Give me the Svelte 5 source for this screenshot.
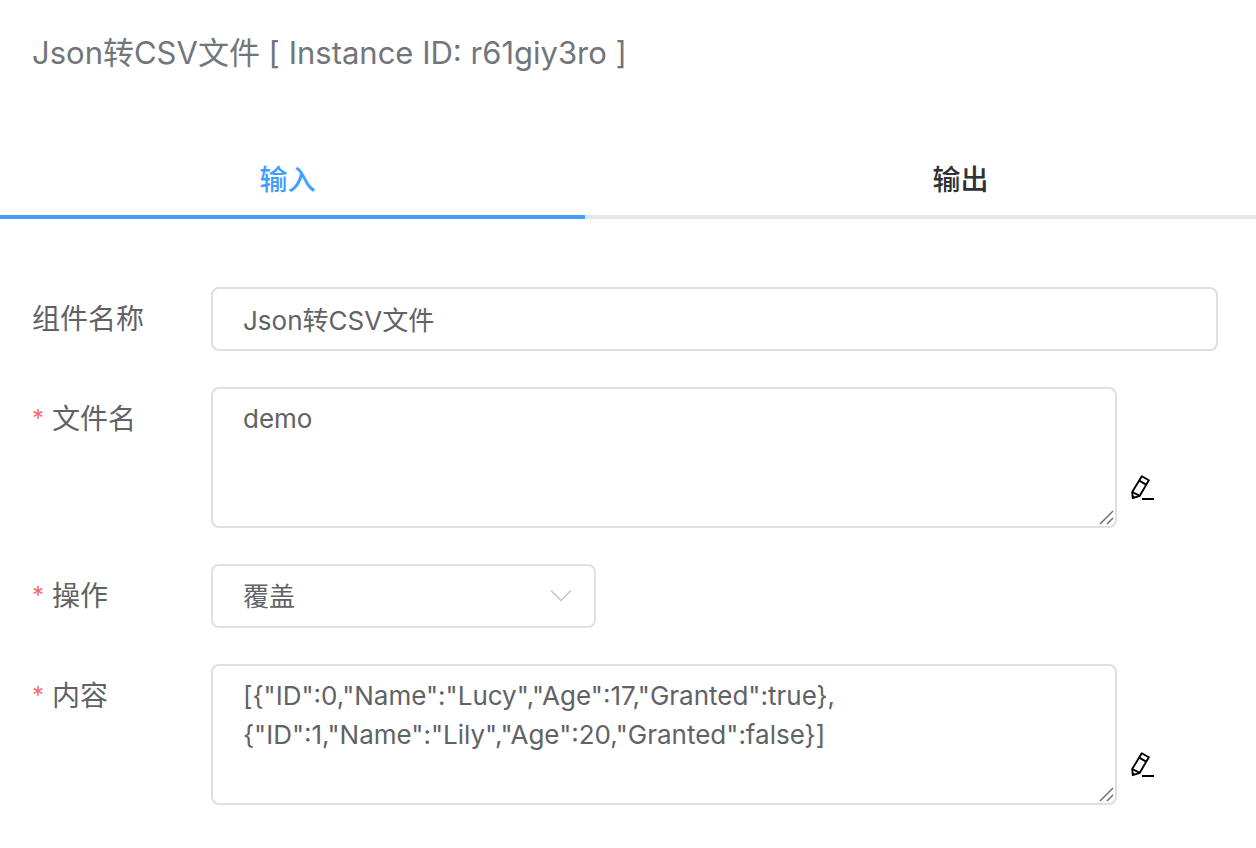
<script>
  let active = $state('input');
  let name = $state('Json转CSV文件');
  let fileName = $state('demo');
  let mode = $state('覆盖');
  let content = $state(
    '[{"ID":0,"Name":"Lucy","Age":17,"Granted":true},\n{"ID":1,"Name":"Lily","Age":20,"Granted":false}]'
  );
</script>

{#snippet pencil()}
  <svg viewBox="0 0 26 26" width="26" height="26" fill="none" stroke="#000" stroke-width="1.9" stroke-linejoin="round" aria-hidden="true">
    <path d="M11.8 2.2 L18.8 6.2 L9.8 21.8 L2.8 24.2 L2.2 18 Z" />
    <path d="M9.2 6.6 L16.2 10.6 M2.2 18 L9.8 21.8" />
    <path d="M3 21.5 L5.5 23 L3 24 Z" fill="#000" stroke="none" />
    <path d="M12 25 H24" stroke-width="2" />
  </svg>
{/snippet}

{#snippet grip()}
  <svg class="grip" viewBox="0 0 16 16" width="16" height="16" fill="none" stroke="#707070" stroke-width="1.5" aria-hidden="true">
    <path d="M1 15 L14 2 M8 15 L14 9" />
  </svg>
{/snippet}

<main>
  <h1>Json转CSV文件 [ Instance ID: r61giy3ro ]</h1>

  <div class="tabs" role="tablist">
    <button class="tab first" class:active={active === 'input'} role="tab" aria-selected={active === 'input'} onclick={() => (active = 'input')}>输入</button>
    <button class="tab second" class:active={active === 'output'} role="tab" aria-selected={active === 'output'} onclick={() => (active = 'output')}>输出</button>
  </div>

  <form>
    <div class="row">
      <label for="name">组件名称</label>
      <input id="name" class="field" type="text" bind:value={name} />
    </div>
    <div class="row">
      <label for="file" class="required">文件名</label>
      <div class="editor">
        <div class="area">
          <textarea id="file" class="field" spellcheck="false" bind:value={fileName}></textarea>
          {@render grip()}
        </div>
        <button type="button" class="edit" aria-label="编辑文件名">{@render pencil()}</button>
      </div>
    </div>
    <div class="row">
      <label for="mode" class="required">操作</label>
      <div class="choice">
        <select id="mode" class="field" bind:value={mode}>
          <option>覆盖</option>
        </select>
        <svg class="arrow" viewBox="0 0 22 14" width="22" height="14" fill="none" stroke="#c0c4cc" stroke-width="1.5" stroke-linecap="round" stroke-linejoin="round" aria-hidden="true">
          <path d="M1.5 2 L11 11.5 L20.5 2" />
        </svg>
      </div>
    </div>
    <div class="row">
      <label for="content" class="required">内容</label>
      <div class="editor">
        <div class="area">
          <textarea id="content" class="field" spellcheck="false" bind:value={content}></textarea>
          {@render grip()}
        </div>
        <button type="button" class="edit" aria-label="编辑内容">{@render pencil()}</button>
      </div>
    </div>
  </form>
</main>

<style>
  :global(body) {
    margin: 0;
    background: #fff;
  }
  main,
  button,
  .field {
    font-family: Inter, 'Noto Sans CJK SC', sans-serif;
  }
  h1 {
    margin: 0;
    padding: 32px 32px 0;
    font-size: 31px;
    line-height: 42px;
    font-weight: 400;
    color: #72767b;
  }
  .tabs {
    display: grid;
    grid-template-columns: 585fr 671fr;
    margin-top: 66px;
  }
  .tab {
    border: 0;
    border-bottom: 4px solid #e4e7ed;
    background: none;
    height: 79px;
    padding: 0;
    font-size: 28px;
    font-weight: 500;
    color: #303133;
    cursor: pointer;
  }
  .tab.first {
    padding-right: 10px;
  }
  .tab.second {
    padding-left: 80px;
  }
  .tab.active {
    color: #409eff;
    border-color: #409eff;
  }
  form {
    display: flex;
    flex-direction: column;
    gap: 36px;
    padding: 68px 38px 36px 32px;
  }
  .row {
    display: grid;
    grid-template-columns: 179px 1fr;
    align-items: start;
  }
  label {
    display: flex;
    gap: 8px;
    font-size: 28px;
    line-height: 64px;
    color: #606266;
  }
  .required::before {
    content: '*';
    width: 12px;
    font-size: 24px;
    text-align: center;
    color: #f56c6c;
  }
  .field {
    display: block;
    box-sizing: border-box;
    width: 100%;
    height: 64px;
    margin: 0;
    padding: 0 30px 2px;
    border: 2px solid #dcdfe6;
    border-radius: 8px;
    background: #fff;
    font-size: 26px;
    color: #606266;
    outline: none;
  }
  .field:focus {
    border-color: #409eff;
  }
  textarea.field {
    height: 141px;
    padding: 10px 30px;
    line-height: 39px;
    resize: vertical;
  }
  textarea::-webkit-resizer {
    background: transparent;
  }
  .editor {
    display: flex;
    align-items: flex-end;
    gap: 13px;
    padding-right: 62px;
  }
  .area {
    position: relative;
    flex: 1;
  }
  .grip {
    position: absolute;
    right: 2px;
    bottom: 3px;
    pointer-events: none;
  }
  .edit {
    display: flex;
    margin: 0 0 28px;
    padding: 0;
    border: 0;
    background: none;
    cursor: pointer;
  }
  .choice {
    position: relative;
    width: 385px;
    max-width: 100%;
  }
  select.field {
    appearance: none;
    padding-bottom: 0;
  }
  .arrow {
    position: absolute;
    right: 24px;
    top: 25px;
    pointer-events: none;
  }
</style>
